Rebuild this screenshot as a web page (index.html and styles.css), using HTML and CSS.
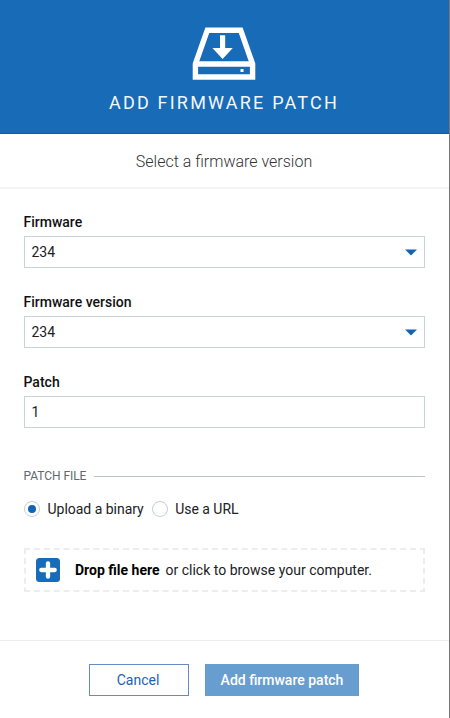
FILE: index.html
```html
<!DOCTYPE html>
<html lang="en">
<head>
<meta charset="utf-8">
<title>Add firmware patch</title>
<link rel="stylesheet" href="styles.css">
</head>
<body>
<main class="dialog">
  <header class="header">
    <svg class="drive" width="66" height="54" viewBox="0 0 66 54">
      <path d="M4.400 37 16.300 3.300H49.700L61.600 37V50H4.400Z M4.400 37H61.600" fill="none" stroke="#fff" stroke-width="5.400"/>
      <path d="M29 8.300H34.200V21H41.800L31.600 32 21.400 21H29Z" fill="#fff"/>
      <rect x="49.500" y="42" width="3" height="3" fill="#fff"/>
    </svg>
    <h1 class="title"><span>ADD FIRMWARE PATCH</span></h1>
  </header>
  <p class="subtitle"><span>Select a firmware version</span></p>
  <form class="form">
    <div class="field">
      <label class="label"><span>Firmware</span></label>
      <div class="control"><span>234</span><svg width="12" height="7" viewBox="0 0 12 7"><path d="M0 .5H12L6 6.500Z" fill="#1165b8"/></svg></div>
    </div>
    <div class="field">
      <label class="label"><span>Firmware version</span></label>
      <div class="control"><span>234</span><svg width="12" height="7" viewBox="0 0 12 7"><path d="M0 .5H12L6 6.500Z" fill="#1165b8"/></svg></div>
    </div>
    <div class="field">
      <label class="label"><span>Patch</span></label>
      <div class="control"><span>1</span></div>
    </div>
    <div class="section"><span>PATCH FILE</span></div>
    <div class="options">
      <label class="option"><i class="radio checked"></i><span class="upload">Upload a binary</span></label>
      <label class="option"><i class="radio"></i><span class="url">Use a URL</span></label>
    </div>
    <div class="drop">
      <svg class="dash" width="401" height="44" viewBox="0 0 401 44"><path d="M0 1H401M0 43H401M1 0V44M400 0V44" fill="none" stroke="#ededed" stroke-width="2" stroke-dasharray="6 3.900"/></svg>
      <svg class="plus" width="24" height="24" viewBox="0 0 24 24"><rect width="24" height="24" rx="3.500" fill="#176bb7"/><path d="M12 5.300V18.700M5.300 12H18.700" stroke="#fff" stroke-width="4.300" stroke-linecap="round"/></svg>
      <strong>Drop file here</strong><span class="browse">or click to browse your computer.</span>
    </div>
  </form>
  <footer class="footer">
    <button class="button cancel" type="button">Cancel</button>
    <button class="button submit" type="button">Add firmware patch</button>
  </footer>
</main>
</body>
</html>
```

FILE: styles.css
```css
* { box-sizing: border-box; }
body { margin: 0; font-family: Roboto, "Liberation Sans", sans-serif; font-size: 14px; color: #202124; background: #fff; }
.dialog { height: 718px; border-right: 1px solid #777; overflow: hidden; }
.header { height: 134px; padding-top: 27px; background: #186bb7; border-bottom: 1px solid #0b5cb3; display: flex; flex-direction: column; align-items: center; }
.drive { display: block; flex: none; margin-right: 1px; }
.title { margin: 10px 0 0; padding-right: 1px; font-size: 18px; line-height: 24px; font-weight: 400; letter-spacing: 2.200px; color: #f4f8fc; white-space: nowrap; }
.subtitle { margin: 0; height: 55px; padding-right: 1px; border-bottom: 2px solid #f4f4f4; text-align: center; font-size: 16px; line-height: 55px; font-weight: 300; color: #333; }
.form { height: 451px; padding: 24px 24px 0; }
.field { height: 80px; }
.label { display: block; height: 23px; margin-left: -0.500px; line-height: 18px; font-weight: 500; color: #111; }
.control { width: 401px; height: 32px; border: 1px solid #cbd4d8; padding: 0 7.500px 0 6.500px; display: flex; align-items: center; justify-content: space-between; }
.section { width: 401px; height: 24px; display: flex; align-items: center; gap: 8px; margin-top: 11px; font-size: 12px; letter-spacing: -0.050px; color: #5e686d; }
.section span { margin-left: -0.500px; }
.section::after { content: ""; flex: 1; height: 1px; background: #bcc3c7; }
.options { display: flex; gap: 8px; height: 18px; margin-top: 12px; }
.option { display: flex; align-items: center; gap: 7.500px; letter-spacing: -0.020px; }
.radio { width: 16px; height: 16px; border: 1px solid #c5cfd4; border-radius: 50%; display: grid; place-items: center; }
.checked::after { content: ""; width: 8px; height: 8px; border-radius: 50%; background: #1165b8; }
.drop { position: relative; width: 401px; height: 44px; margin-top: 30px; padding-left: 11.500px; display: flex; align-items: center; }
.dash { position: absolute; left: 0; top: 0; }
.plus { margin-right: 15.500px; }
.drop strong { font-weight: 700; color: #000; margin-right: 6px; }
.footer { height: 78px; border-top: 1px solid #eee; padding: 23px 1px 0 0; display: flex; justify-content: center; gap: 16px; }
.button { height: 32px; padding: 0; font: 400 14px Roboto, "Liberation Sans", sans-serif; }
.cancel { width: 100px; padding-right: 2px; color: #1d61b3; background: #fff; border: 1px solid #668bc8; }
.submit { width: 154px; color: #fff; background: #689ecf; border: 0; font-weight: 500; }
```
